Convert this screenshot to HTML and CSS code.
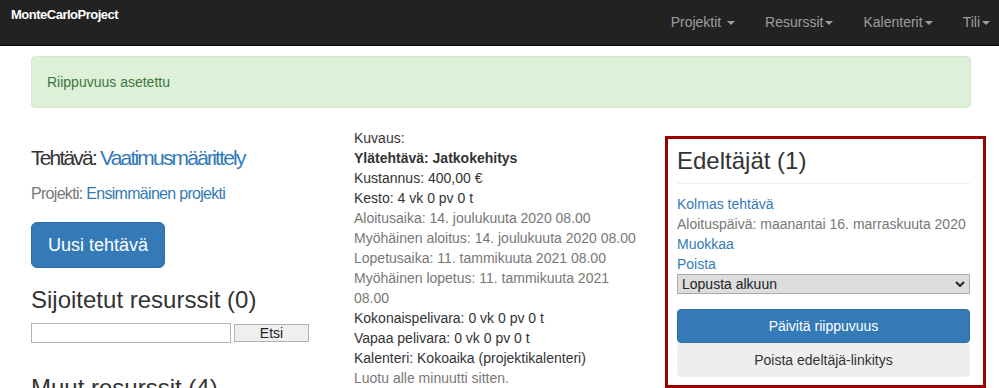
FILE: index.html
```html
<!DOCTYPE html>
<html lang="fi">
<head>
<meta charset="utf-8">
<title>MonteCarloProject</title>
<link rel="stylesheet" href="styles.css">
</head>
<body>
<nav class="navbar">
  <a class="brand" href="#">MonteCarloProject</a>
  <ul class="nav">
    <li><a href="#">Projektit <span class="caret"></span></a></li>
    <li><a href="#">Resurssit<span class="caret"></span></a></li>
    <li><a href="#">Kalenterit<span class="caret"></span></a></li>
    <li class="last"><a href="#">Tili<span class="caret"></span></a></li>
  </ul>
</nav>
<main class="container">
  <div class="alert">Riippuvuus asetettu</div>
  <div class="row">
    <section class="col col-task">
      <h2 class="task-title">Tehtävä: <a href="#">Vaatimusmäärittely</a></h2>
      <p class="project">Projekti: <a href="#">Ensimmäinen projekti</a></p>
      <a class="btn btn-primary btn-lg" href="#">Uusi tehtävä</a>
      <h3 class="h3 assigned">Sijoitetut resurssit (0)</h3>
      <form class="search"><input class="search-input" type="text"><button class="search-btn" type="button">Etsi</button></form>
      <h3 class="h3 others">Muut resurssit (4)</h3>
    </section>
    <section class="col col-details">
      <div>Kuvaus:</div>
      <div class="strong">Ylätehtävä: Jatkokehitys</div>
      <div>Kustannus: 400,00 €</div>
      <div>Kesto: 4 vk 0 pv 0 t</div>
      <div class="muted">Aloitusaika: 14. joulukuuta 2020 08.00</div>
      <div class="muted">Myöhäinen aloitus: 14. joulukuuta 2020 08.00</div>
      <div class="muted">Lopetusaika: 11. tammikuuta 2021 08.00</div>
      <div class="muted">Myöhäinen lopetus: 11. tammikuuta 2021 08.00</div>
      <div>Kokonaispelivara: 0 vk 0 pv 0 t</div>
      <div>Vapaa pelivara: 0 vk 0 pv 0 t</div>
      <div>Kalenteri: Kokoaika (projektikalenteri)</div>
      <div class="muted">Luotu alle minuutti sitten.</div>
    </section>
    <aside class="panel">
      <h3 class="panel-title">Edeltäjät (1)</h3>
      <div class="pred">
        <a href="#">Kolmas tehtävä</a>
        <div class="muted">Aloituspäivä: maanantai 16. marraskuuta 2020</div>
        <a href="#">Muokkaa</a>
        <a href="#">Poista</a>
      </div>
      <div class="select-wrap">
        <select class="select"><option>Lopusta alkuun</option></select>
        <svg class="chev" width="10" height="6" viewBox="0 0 10 6"><path d="M1 1 L5 5 L9 1" fill="none" stroke="#222" stroke-width="2"/></svg>
      </div>
      <div class="actions">
        <button class="btn btn-primary btn-block" type="button">Päivitä riippuvuus</button>
        <button class="btn btn-light btn-block" type="button">Poista edeltäjä-linkitys</button>
      </div>
    </aside>
  </div>
</main>
</body>
</html>
```

FILE: styles.css
```css
html, body {
  margin: 0;
  padding: 0;
  overflow: hidden;
}
body {
  font-family: "Liberation Sans", Arial, sans-serif;
  font-size: 14px;
  line-height: 20px;
  color: #333;
  background: #fff;
}
a {
  color: #337ab7;
  text-decoration: none;
}

/* navbar */
.navbar {
  display: flex;
  justify-content: space-between;
  align-items: flex-start;
  height: 45px;
  background: #222;
  border-bottom: 1px solid #080808;
}
.brand {
  color: #fff;
  font-weight: bold;
  font-size: 13px;
  line-height: 16px;
  letter-spacing: -0.5px;
  padding: 7px 0 0 11px;
}
.nav {
  display: flex;
  list-style: none;
  margin: 0;
  padding: 0;
}
.nav a {
  display: block;
  color: #9d9d9d;
  padding: 12px 15px 0;
  line-height: 20px;
}
.nav .last a {
  padding-right: 9px;
}
.caret {
  display: inline-block;
  width: 0;
  height: 0;
  margin-left: 2px;
  vertical-align: middle;
  border-top: 4px solid;
  border-left: 4px solid transparent;
  border-right: 4px solid transparent;
}

/* layout */
.container {
  width: 940px;
  margin-left: 31px;
}
.alert {
  margin-top: 10px;
  padding: 15px;
  background: #dff0d8;
  border: 1px solid #d6e9c6;
  border-radius: 4px;
  color: #3c763d;
}
.row {
  display: grid;
  grid-template-columns: 323px 311px 321px;
  margin-top: 20px;
  align-items: start;
}
.col-task {
  padding-right: 30px;
}
.col-details {
  padding-right: 18px;
}

/* left column */
.task-title {
  margin: 19px 0 0;
  font-size: 21px;
  line-height: 22px;
  font-weight: normal;
  letter-spacing: -1.8px;
}
.project {
  margin: 16px 0 0;
  font-size: 16px;
  line-height: 18px;
  color: #777;
  letter-spacing: -0.7px;
}
.btn {
  display: inline-block;
  box-sizing: border-box;
  text-align: center;
  font-family: inherit;
  font-size: 14px;
  line-height: 20px;
  padding: 6px 12px;
  border: 1px solid transparent;
  border-radius: 4px;
  cursor: pointer;
}
.btn-primary {
  background: #337ab7;
  border-color: #2e6da4;
  color: #fff;
}
.btn-lg {
  margin-top: 19px;
  font-size: 18px;
  line-height: 24px;
  padding: 10px 16px;
  border-radius: 6px;
}
.h3 {
  font-size: 24px;
  line-height: 26px;
  font-weight: normal;
  margin: 0;
}
.assigned {
  margin-top: 19px;
}
.search {
  display: flex;
  align-items: flex-start;
  margin: 10px 0 0;
}
.search-input {
  box-sizing: border-box;
  width: 200px;
  height: 20px;
  border: 1px solid #b3b3b3;
  padding: 0 3px;
  margin: 0;
  font-family: inherit;
  font-size: 14px;
}
.search-btn {
  box-sizing: border-box;
  width: 75px;
  height: 18px;
  margin: 1px 0 0 3px;
  padding: 0;
  border: 1px solid #b3b3b3;
  background: #efefef;
  color: #222;
  font-family: inherit;
  font-size: 14px;
  line-height: 16px;
}
.others {
  margin-top: 32px;
}

/* middle column */
.strong {
  font-weight: bold;
}
.muted {
  color: #777;
}

/* panel */
.panel {
  margin-top: 8px;
  border: 3px solid #990000;
  padding: 9px 13px 8px 9px;
}
.panel-title {
  margin: 0;
  font-size: 24px;
  line-height: 26px;
  font-weight: normal;
  padding-bottom: 9px;
  border-bottom: 1px solid #eee;
}
.pred {
  display: flex;
  flex-direction: column;
  margin-top: 10px;
}
.pred a {
  align-self: flex-start;
}
.select-wrap {
  position: relative;
  height: 20px;
}
.select {
  appearance: none;
  -webkit-appearance: none;
  box-sizing: border-box;
  display: block;
  width: 100%;
  height: 20px;
  margin: 0;
  padding: 0 4px;
  border: 1px solid #aaa;
  border-radius: 0;
  background: #dddddd;
  color: #222;
  font-family: inherit;
  font-size: 14px;
  line-height: 18px;
}
.chev {
  position: absolute;
  right: 5px;
  top: 7px;
  pointer-events: none;
}
.actions {
  margin-top: 15px;
  display: flex;
  flex-direction: column;
}
.btn-block {
  display: block;
  width: 100%;
  height: 34px;
}
.btn-light {
  background: #eeeeee;
  border-color: #eeeeee;
  color: #333;
}
```
